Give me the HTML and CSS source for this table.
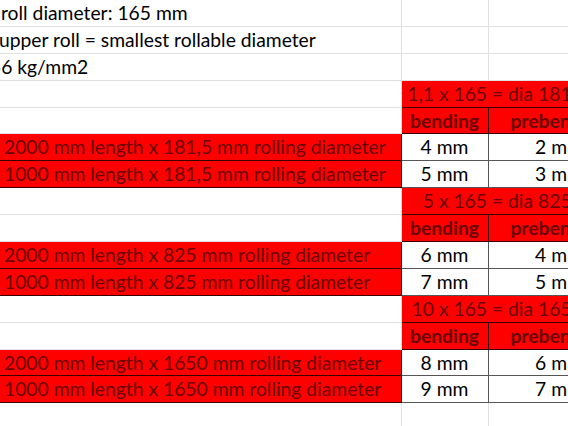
FILE: index.html
```html
<!DOCTYPE html>
<html>
<head>
<meta charset="utf-8">
<link rel="stylesheet" href="styles.css">
</head>
<body>
<table class="sheet">
  <colgroup><col class="ca"><col class="cb"><col class="cc"></colgroup>
  <tr><td class="a t0">roll diameter: 165 mm</td><td></td><td></td></tr>
  <tr><td class="a t1">upper roll = smallest rollable diameter</td><td></td><td></td></tr>
  <tr><td class="a t2">56 kg/mm2</td><td></td><td></td></tr>
  <tr><td class="a"></td><td class="hd" colspan="2">1,1 x 165 = dia 181,5 mm</td></tr>
  <tr><td class="a"></td><td class="hd b">bending</td><td class="hd b">prebending</td></tr>
  <tr><td class="a lab">2000 mm length x 181,5 mm rolling diameter</td><td class="val">4 mm</td><td class="val">2 mm</td></tr>
  <tr><td class="a lab">1000 mm length x 181,5 mm rolling diameter</td><td class="val">5 mm</td><td class="val">3 mm</td></tr>
  <tr><td class="a"></td><td class="hd" colspan="2">5 x 165 = dia 825 mm</td></tr>
  <tr><td class="a"></td><td class="hd b">bending</td><td class="hd b">prebending</td></tr>
  <tr><td class="a lab">2000 mm length x 825 mm rolling diameter</td><td class="val">6 mm</td><td class="val">4 mm</td></tr>
  <tr><td class="a lab">1000 mm length x 825 mm rolling diameter</td><td class="val">7 mm</td><td class="val">5 mm</td></tr>
  <tr><td class="a"></td><td class="hd" colspan="2">10 x 165 = dia 1650 mm</td></tr>
  <tr><td class="a"></td><td class="hd b">bending</td><td class="hd b">prebending</td></tr>
  <tr><td class="a lab">2000 mm length x 1650 mm rolling diameter</td><td class="val">8 mm</td><td class="val">6 mm</td></tr>
  <tr><td class="a lab">1000 mm length x 1650 mm rolling diameter</td><td class="val">9 mm</td><td class="val">7 mm</td></tr>
  <tr><td class="a"></td><td></td><td></td></tr>
</table>
</body>
</html>
```
FILE: styles.css
```css
html, body {
  margin: 0;
  padding: 0;
  background: #ffffff;
  overflow: hidden;
}
body {
  font-family: Lato, "Open Sans", "Liberation Sans", sans-serif;
  font-size: 19.3px;
  color: #000;
}
.sheet {
  border-collapse: collapse;
  table-layout: fixed;
  width: 630px;
  margin-top: -1px;
}
.ca { width: 401px; }
.cb { width: 87px; }
.cc { width: 142px; }
.sheet td {
  height: 26.9px;
  padding: 0 4px;
  border: 1px solid #e0e0e0;
  white-space: nowrap;
  overflow: hidden;
  line-height: 24px;
  box-sizing: border-box;
}
.sheet td.a {
  border-left: none;
}
.t0 { text-indent: -3px; }
.t1 { text-indent: -5px; }
.t2 { text-indent: -14px; }
.lab {
  background: #ff0000;
  color: #6a0000;
  border: 1px solid #3a0000 !important;
  border-left: none !important;
}
.hd {
  background: #ff0000;
  color: #6a0000;
  text-align: center;
  border: 1px solid #3a0000 !important;
}
.b { font-weight: 700; }
.val {
  text-align: center;
  border: 1px solid #555555 !important;
  color: #000;
}
```
